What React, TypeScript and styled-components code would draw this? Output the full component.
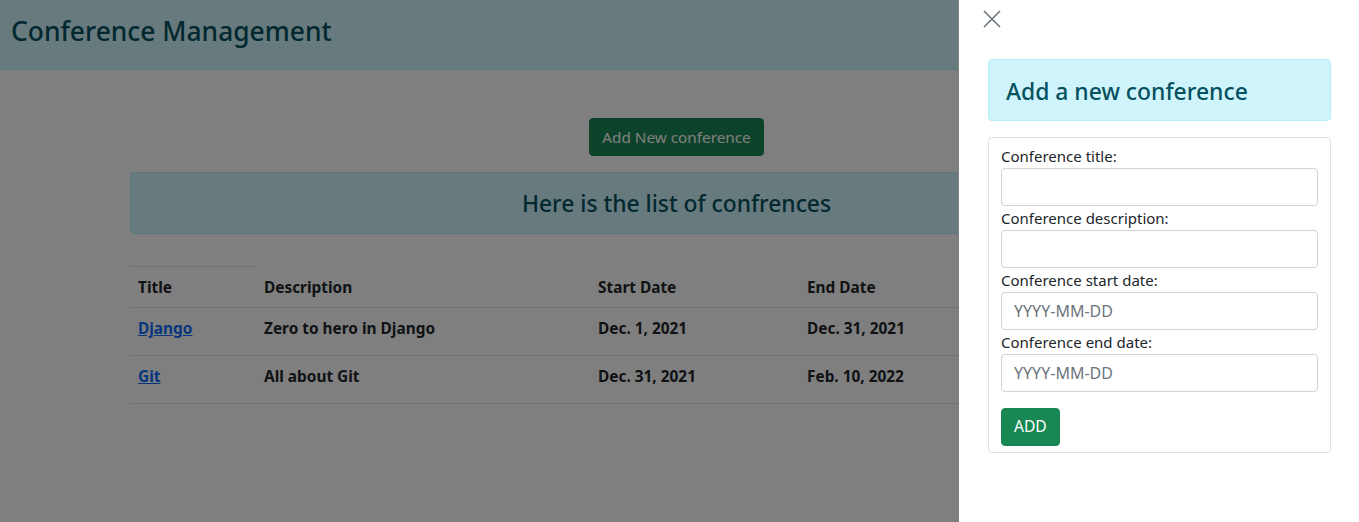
import React from "react";
import styled, { createGlobalStyle } from "styled-components";

const Global = createGlobalStyle`
  html, body { margin: 0; padding: 0; background: #fff; }
  body { font-family: "Noto Sans", "Open Sans", sans-serif; color: #212529; font-size: 16px; line-height: 1.5; }
  * { box-sizing: border-box; }
`;

const Header = styled.header`
  height: 70px;
  background: #cff4fc;
  border-bottom: 1px solid #b6effb;
  display: flex;
  align-items: center;
  padding: 0 0 5px 11px;
`;

const AppTitle = styled.h3`
  margin: 0;
  font-size: 26.4px;
  font-weight: 500;
  color: #055160;
  line-height: 1.2;
`;

const Main = styled.main`
  width: 1093px;
  margin-left: 130px;
  padding-top: 48px;
  display: flex;
  flex-direction: column;
`;

const ButtonRow = styled.div`
  display: flex;
  justify-content: center;
`;

const Button = styled.button<{ $size: number }>`
  height: 38px;
  padding: 0 12px;
  border: 1px solid #198754;
  border-radius: 4px;
  background: #198754;
  color: #fff;
  font-family: inherit;
  font-size: ${(p) => p.$size}px;
  line-height: 1.5;
  white-space: nowrap;
  cursor: pointer;
`;

const Alert = styled.div<{ $h: number; $pad: string; $align: string; $size: number }>`
  height: ${(p) => p.$h}px;
  background: #cff4fc;
  border: 1px solid #b6effb;
  border-radius: 4px;
  color: #055160;
  display: flex;
  align-items: center;
  justify-content: ${(p) => p.$align};
  padding: ${(p) => p.$pad};
  font-size: ${(p) => p.$size}px;
  font-weight: 500;
`;

const ListAlert = styled(Alert)`
  margin-top: 16px;
`;

const Table = styled.table`
  margin-top: 32px;
  width: 100%;
  border-collapse: collapse;
  font-weight: 700;
  font-size: 15.4px;
`;

const Th = styled.th<{ $w?: number; $top?: boolean }>`
  text-align: left;
  padding: 2px 8px 0 8px;
  height: 41px;
  width: ${(p) => (p.$w ? `${p.$w}px` : "auto")};
  border-top: ${(p) => (p.$top ? "1px solid #dee2e6" : "1px solid transparent")};
  border-bottom: 1px solid #dee2e6;
  vertical-align: middle;
`;

const Td = styled.td`
  padding: 0 8px 6px 8px;
  height: 48px;
  border-bottom: 1px solid #dee2e6;
  vertical-align: middle;
`;

const TitleLink = styled.a`
  color: #0d6efd;
  text-decoration: underline;
`;

const Backdrop = styled.div`
  position: fixed;
  inset: 0;
  background: rgba(0, 0, 0, 0.5);
`;

const Offcanvas = styled.aside`
  position: fixed;
  top: 0;
  right: 0;
  width: 401px;
  height: 100%;
  background: #fff;
  border-left: 1px solid rgba(0, 0, 0, 0.5);
  display: flex;
  flex-direction: column;
`;

const OffHeader = styled.div`
  height: 38px;
  padding: 10px 0 0 24px;
`;

const CloseButton = styled.button`
  width: 18px;
  height: 18px;
  padding: 0;
  border: 0;
  background: transparent;
  color: #6c757d;
  display: flex;
  cursor: pointer;
`;

const OffBody = styled.div`
  padding: 21px 28px 0 29px;
  display: flex;
  flex-direction: column;
`;

const FormCard = styled.form`
  margin-top: 16px;
  border: 1px solid #dee2e6;
  border-radius: 4px;
  padding: 6px 12px 6px 12px;
  display: flex;
  flex-direction: column;
`;

const Label = styled.label`
  font-size: 15px;
  line-height: 24px;
  height: 24px;
  color: #212529;
`;

const Input = styled.input`
  height: 38px;
  width: 100%;
  border: 1px solid #ced4da;
  border-radius: 4px;
  padding: 0 12px;
  font-family: inherit;
  font-size: 16px;
  color: #212529;
  &::placeholder { color: #6c757d; opacity: 1; }
`;

const SubmitRow = styled.div`
  margin-top: 16px;
  display: flex;
`;

const rows = [
  { title: "Django", desc: "Zero to hero in Django", start: "Dec. 1, 2021", end: "Dec. 31, 2021" },
  { title: "Git", desc: "All about Git", start: "Dec. 31, 2021", end: "Feb. 10, 2022" },
];

const fields = [
  { label: "Conference title:", ph: "" },
  { label: "Conference description:", ph: "" },
  { label: "Conference start date:", ph: "YYYY-MM-DD" },
  { label: "Conference end date:", ph: "YYYY-MM-DD" },
];

export default function App() {
  return (
    <>
      <Global />
      <Header>
        <AppTitle>Conference Management</AppTitle>
      </Header>
      <Main>
        <ButtonRow>
          <Button $size={15.3}>Add New conference</Button>
        </ButtonRow>
        <ListAlert $h={62} $pad="3px 0 0 0" $align="center" $size={22.8}>
          Here is the list of confrences
        </ListAlert>
        <Table>
          <thead>
            <tr>
              <Th $w={126} $top>Title</Th>
              <Th $w={334}>Description</Th>
              <Th $w={209}>Start Date</Th>
              <Th $w={209}>End Date</Th>
              <Th></Th>
            </tr>
          </thead>
          <tbody>
            {rows.map((r) => (
              <tr key={r.title}>
                <Td>
                  <TitleLink href="#">{r.title}</TitleLink>
                </Td>
                <Td>{r.desc}</Td>
                <Td>{r.start}</Td>
                <Td>{r.end}</Td>
                <Td></Td>
              </tr>
            ))}
          </tbody>
        </Table>
      </Main>
      <Backdrop />
      <Offcanvas>
        <OffHeader>
          <CloseButton aria-label="Close">
            <svg width="18" height="18" viewBox="0 0 18 18" fill="none" stroke="currentColor" strokeWidth="1.6">
              <path d="M1 1L17 17M17 1L1 17" />
            </svg>
          </CloseButton>
        </OffHeader>
        <OffBody>
          <Alert $h={62} $pad="4px 0 0 17px" $align="flex-start" $size={22.9}>
            Add a new conference
          </Alert>
          <FormCard onSubmit={(e) => e.preventDefault()}>
            {fields.map((f) => (
              <React.Fragment key={f.label}>
                <Label>{f.label}</Label>
                <Input placeholder={f.ph} />
              </React.Fragment>
            ))}
            <SubmitRow>
              <Button type="submit" $size={15.6}>ADD</Button>
            </SubmitRow>
          </FormCard>
        </OffBody>
      </Offcanvas>
    </>
  );
}
